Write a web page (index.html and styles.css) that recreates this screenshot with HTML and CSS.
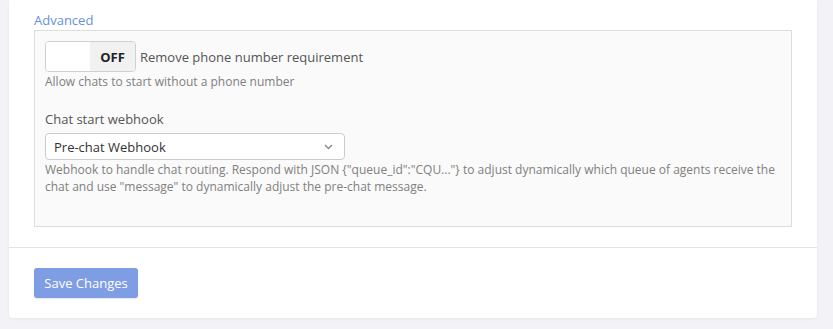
FILE: index.html
```html
<!DOCTYPE html>
<html>
  <head>
    <meta charset="utf-8">
    <title>Chat settings</title>
    <link rel="stylesheet" href="styles.css">
  </head>
  <body>
    <div class="card">
      <div class="cardBody">
        <a class="advanced" href="#">Advanced</a>
        <div class="panel">
          <div class="toggleRow">
            <div class="toggle">
              <span class="toggleOn"></span>
              <span class="toggleOff">OFF</span>
            </div>
            <span class="toggleLabel">Remove phone number requirement</span>
          </div>
          <p class="help">Allow chats to start without a phone number</p>

          <label class="fieldLabel" for="webhook">Chat start webhook</label>
          <div class="select" id="webhook">
            <span>Pre-chat Webhook</span>
            <svg class="chevron" width="9" height="6" viewBox="0 0 9 6">
              <path d="M1 1 L4.5 4.5 L8 1" fill="none" stroke="#888" stroke-width="1.4"/>
            </svg>
          </div>
          <p class="help">Webhook to handle chat routing. Respond with JSON {"queue_id":"CQU..."} to adjust dynamically which queue of agents receive the chat and use "message" to dynamically adjust the pre-chat message.</p>
        </div>
      </div>
      <div class="cardFooter">
        <button class="saveButton">Save Changes</button>
      </div>
    </div>
  </body>
</html>
```

FILE: styles.css
```css
html {
  background-color: #f3f3f7;
  font-family: "Open Sans", sans-serif;
}

body {
  margin: 0;
  padding: 0 16px 12px 9px;
}

.card {
  background-color: #fff;
  border-radius: 0 0 4px 4px;
  box-shadow: 0 1px 3px rgba(0, 0, 0, 0.06);
}

.cardBody {
  padding: 11px 25px 20px;
  border-bottom: 1px solid #e3e3e6;
}

.advanced {
  display: block;
  font-size: 13px;
  line-height: 19px;
  color: #6690e0;
  text-decoration: none;
}

.panel {
  background-color: #fafafa;
  border: 1px solid #dddddd;
  padding: 10px 10px 31px;
}

.toggleRow {
  display: flex;
  align-items: center;
  gap: 4px;
}

.toggle {
  display: flex;
  width: 89px;
  height: 29px;
  border: 1px solid #cfcfcf;
  border-radius: 4px;
  overflow: hidden;
}

.toggleOn {
  width: 44px;
  background-color: #fff;
}

.toggleOff {
  flex: 1;
  display: flex;
  align-items: center;
  justify-content: center;
  background-color: #f1f1f1;
  font-size: 13px;
  font-weight: bold;
  color: #222;
}

.toggleLabel {
  font-size: 13px;
  color: #555;
}

.help {
  margin: 1px 0 0;
  font-size: 12px;
  line-height: 17px;
  color: #808080;
}

.fieldLabel {
  display: block;
  margin-top: 19px;
  font-size: 13px;
  line-height: 20px;
  color: #555;
}

.select {
  display: flex;
  align-items: center;
  justify-content: space-between;
  box-sizing: border-box;
  width: 300px;
  height: 27px;
  margin-top: 4px;
  padding: 0 11px 0 8px;
  background-color: #fff;
  border: 1px solid #cccccc;
  border-radius: 4px;
  font-size: 13px;
  color: #333;
}

.cardFooter {
  padding: 20px 25px;
}

.saveButton {
  display: block;
  width: 104px;
  height: 30px;
  padding: 0;
  border: none;
  border-radius: 3px;
  background-color: #7f9de3;
  color: #fff;
  font-family: "Open Sans", sans-serif;
  font-size: 13px;
  box-shadow: 0 1px 2px rgba(0, 0, 0, 0.1);
}
```
